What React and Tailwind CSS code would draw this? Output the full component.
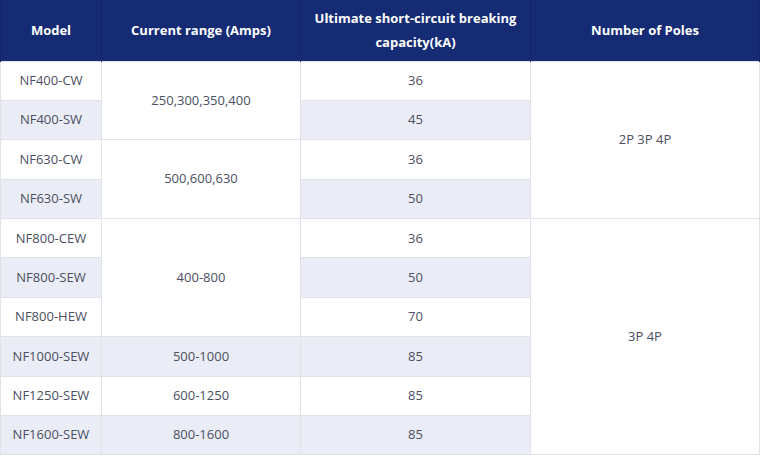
const rows = [
  { model: 'NF400-CW', range: { text: '250,300,350,400', span: 2 }, cap: '36', poles: { text: '2P 3P 4P', span: 4 } },
  { model: 'NF400-SW', cap: '45' },
  { model: 'NF630-CW', range: { text: '500,600,630', span: 2 }, cap: '36' },
  { model: 'NF630-SW', cap: '50' },
  { model: 'NF800-CEW', range: { text: '400-800', span: 3 }, cap: '36', poles: { text: '3P 4P', span: 6 } },
  { model: 'NF800-SEW', cap: '50' },
  { model: 'NF800-HEW', cap: '70' },
  { model: 'NF1000-SEW', range: { text: '500-1000', span: 1 }, cap: '85' },
  { model: 'NF1250-SEW', range: { text: '600-1250', span: 1 }, cap: '85' },
  { model: 'NF1600-SEW', range: { text: '800-1600', span: 1 }, cap: '85' },
];

const cell = 'border border-[#e0e2e8] text-center align-middle';

export default function App() {
  return (
    <div className="w-[760px] h-[456px] bg-white overflow-hidden" style={{ fontFamily: '"Open Sans", "Liberation Sans", sans-serif' }}>
      <table className="w-[759px] table-fixed border-collapse text-[13px] text-[#4b4f63]">
        <colgroup>
          <col className="w-[101px]" />
          <col className="w-[199px]" />
          <col className="w-[230px]" />
          <col className="w-[229px]" />
        </colgroup>
        <thead>
          <tr className="h-[61px] bg-[#152b74] text-white font-bold leading-6">
            <th className="border-x border-[#122566] px-3">Model</th>
            <th className="border-x border-[#122566] px-3">Current range (Amps)</th>
            <th className="border-x border-[#122566] px-3">Ultimate short-circuit breaking capacity(kA)</th>
            <th className="border-x border-[#122566] px-3">Number of Poles</th>
          </tr>
        </thead>
        <tbody>
          {rows.map((r, i) => {
            const bg = i % 2 === 1 ? 'bg-[#eaedf5]' : 'bg-white';
            return (
              <tr key={r.model} className="h-[39.4px]">
                <td className={`${cell} ${bg}`}>{r.model}</td>
                {r.range && (
                  <td rowSpan={r.range.span} className={`${cell} ${bg}`}>{r.range.text}</td>
                )}
                <td className={`${cell} ${bg}`}>{r.cap}</td>
                {r.poles && (
                  <td rowSpan={r.poles.span} className={`${cell} bg-white`}>{r.poles.text}</td>
                )}
              </tr>
            );
          })}
        </tbody>
      </table>
    </div>
  );
}
